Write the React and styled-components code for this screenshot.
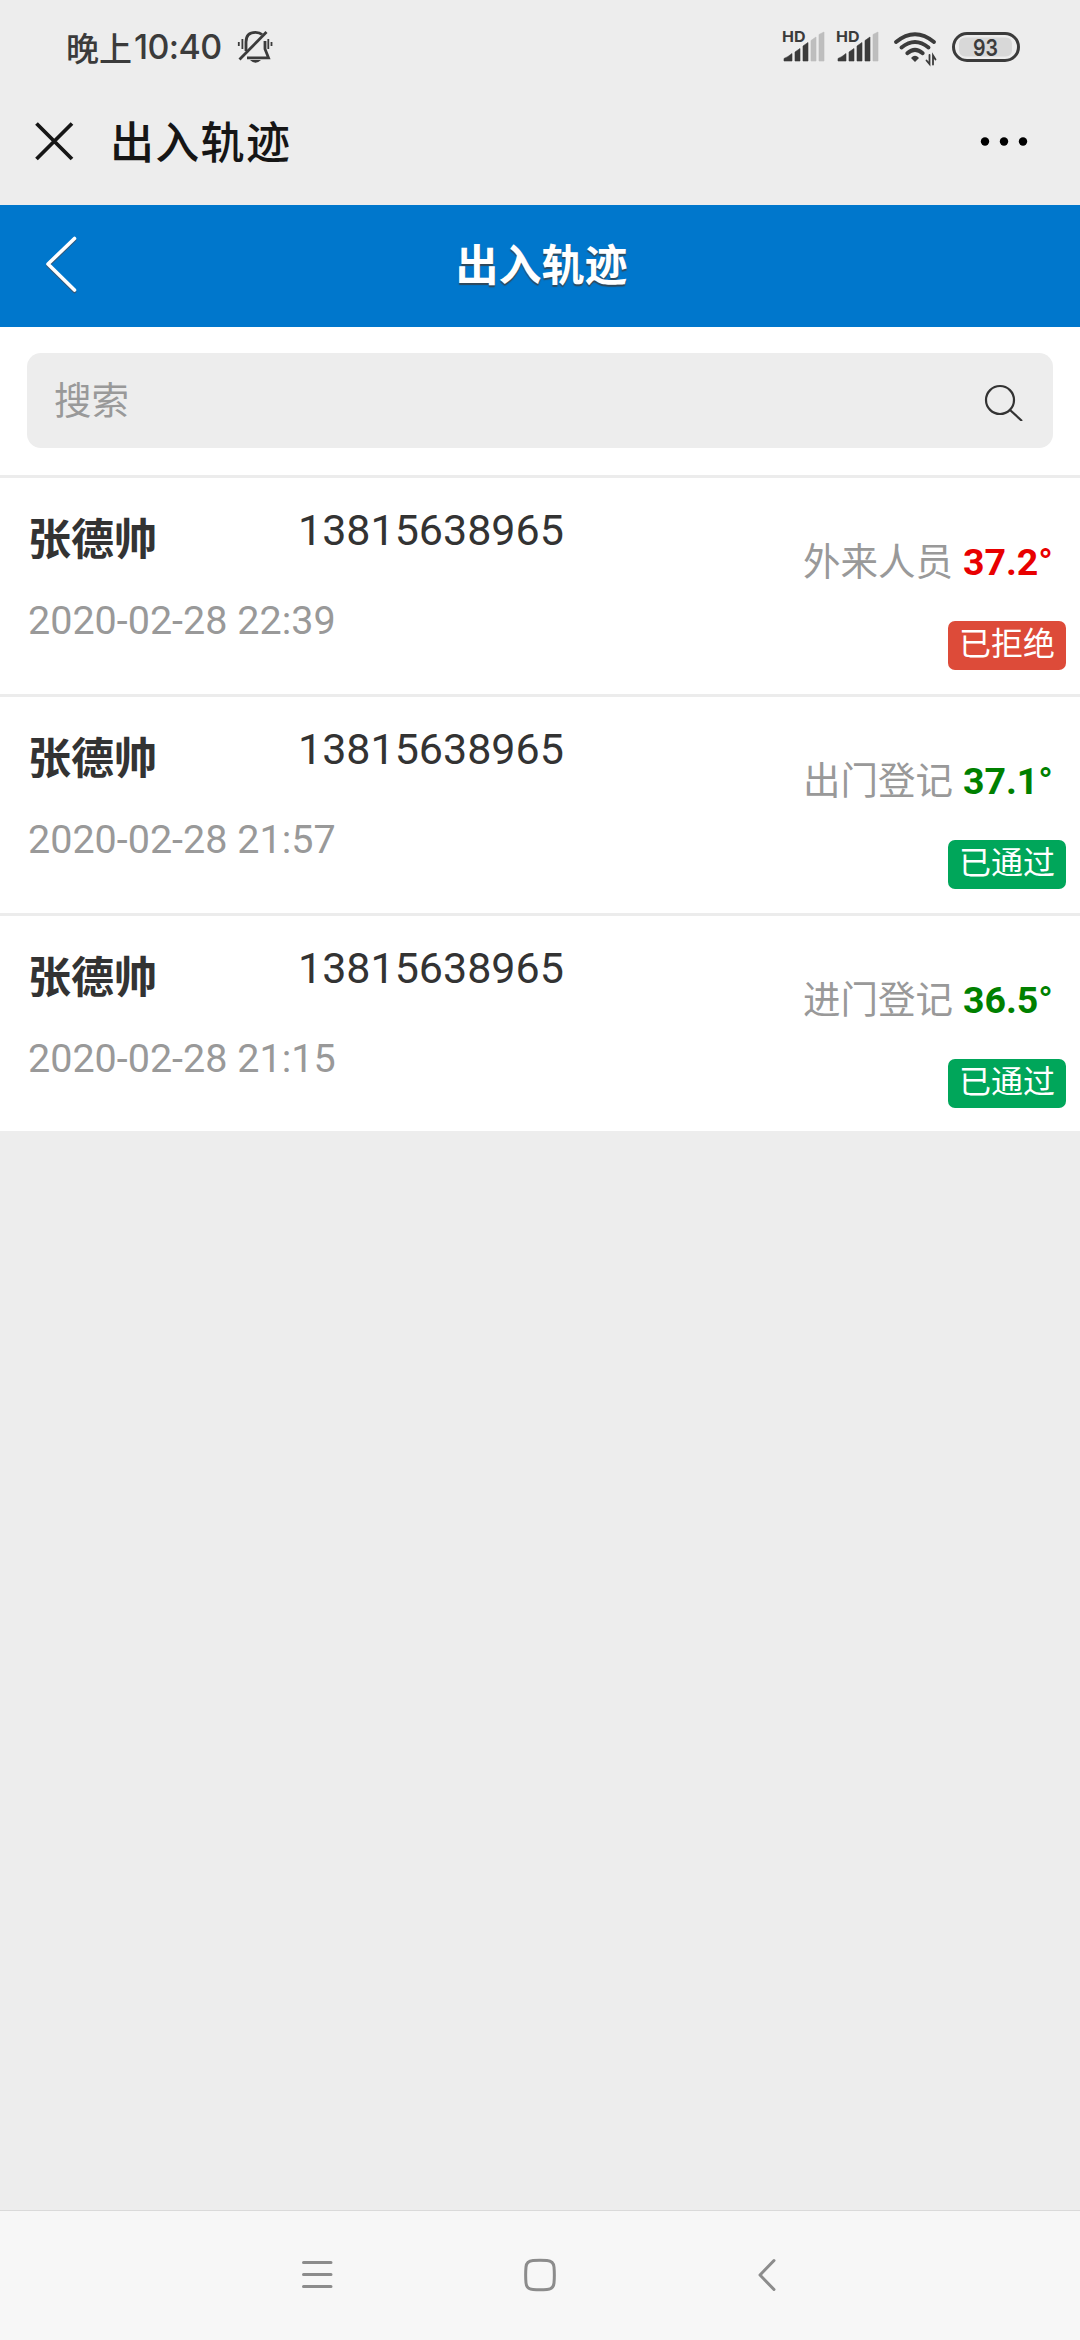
import React from "react";
import styled, { createGlobalStyle } from "styled-components";

const GlobalStyle = createGlobalStyle`
  * {
    box-sizing: border-box;
  }
  body {
    margin: 0;
    background: #ededed;
    font-family: Roboto, "Noto Sans CJK SC", sans-serif;
  }
`;

const Page = styled.div`
  width: 1080px;
  height: 2340px;
  display: flex;
  flex-direction: column;
  background: #ededed;
  overflow: hidden;
`;

const StatusBar = styled.div`
  height: 94px;
  flex: none;
  display: flex;
  justify-content: space-between;
  padding: 0 59px 0 66px;
  color: #3b3b3b;
`;

const StatusSide = styled.div`
  height: 94px;
  display: flex;
  align-items: center;
`;

const Clock = styled.div`
  display: flex;
  align-items: center;
  width: 171px;
  height: 94px;
  white-space: nowrap;
`;

const ClockLabel = styled.span`
  font: 500 33px/94px "Noto Sans CJK SC", sans-serif;
  width: 68px;
`;

const ClockTime = styled.span`
  font: 500 34px/94px Inter, sans-serif;
  letter-spacing: -0.6px;
`;

const HdText = styled.text`
  font: 700 15px Inter, sans-serif;
`;

const BatteryText = styled.text`
  font: 600 23.5px Inter, sans-serif;
`;

const WechatBar = styled.div`
  height: 111px;
  flex: none;
  display: flex;
  align-items: center;
  padding: 0 51px 18px 34px;
  color: #161616;
`;

const WechatTitle = styled.div`
  flex: 1;
  margin: -2px 0 0 36px;
  font: 500 44px/60px "Noto Sans CJK SC", sans-serif;
  letter-spacing: 1.3px;
`;

const Header = styled.div`
  height: 122px;
  flex: none;
  display: grid;
  grid-template-columns: 120px 1fr 120px;
  align-items: center;
  background: #0077cc;
  color: #fff;
`;

const HeaderTitle = styled.div`
  padding: 0 0 8px 3px;
  text-align: center;
  font: 700 43px/60px "Noto Sans CJK SC", sans-serif;
  text-shadow: 0 2px 1px rgba(60, 60, 60, 0.8);
`;

const SearchArea = styled.div`
  height: 148.4px;
  flex: none;
  padding: 26px 27px 0;
  background: #fff;
`;

const SearchBox = styled.div`
  height: 95px;
  display: flex;
  align-items: center;
  justify-content: space-between;
  padding: 0 29px 0 27px;
  border-radius: 14px;
  background: #ededed;
  color: #999;
  font-size: 37.5px;
  line-height: 50px;
`;

const List = styled.div`
  flex: 1;
`;

const Row = styled.div`
  height: 218.6px;
  display: flex;
  justify-content: space-between;
  border-top: 3px solid #ececec;
  background: #fff;
`;

const Person = styled.div`
  padding-left: 28px;
`;

const PersonTop = styled.div`
  display: flex;
  height: 115px;
`;

const Name = styled.div`
  width: 270px;
  padding-top: 28px;
  color: #333;
  font: 700 43px/60px "Noto Sans CJK SC", sans-serif;
`;

const Phone = styled.div`
  padding-top: 27px;
  color: #333;
  font-size: 43px;
  line-height: 50px;
`;

const Time = styled.div`
  color: #999;
  font-size: 39.5px;
  line-height: 56px;
`;

const Record = styled.div`
  display: flex;
  flex-direction: column;
  align-items: flex-end;
  padding: 56px 14px 0 0;
`;

const Kind = styled.div`
  display: flex;
  align-items: baseline;
  gap: 10px;
  height: 87px;
  padding-right: 13px;
  color: #999;
  font-size: 37.5px;
  line-height: 56px;
`;

const Temp = styled.b`
  color: ${(props) => props.$color};
`;

const Badge = styled.div`
  width: 118px;
  height: 49px;
  border-radius: 7px;
  background: ${(props) => props.$color};
  color: #fff;
  text-align: center;
  font-size: 32px;
  line-height: 46px;
`;

const NavBar = styled.div`
  height: 130px;
  flex: none;
  display: grid;
  grid-template-columns: 222px 234px 24px;
  align-items: start;
  padding: 46px 300px 0;
  border-top: 1px solid #dadada;
  background: #f7f7f7;
`;

const records = [
  { id: 1, time: "2020-02-28 22:39", kind: "外来人员", temp: "37.2°", ok: false },
  { id: 2, time: "2020-02-28 21:57", kind: "出门登记", temp: "37.1°", ok: true },
  { id: 3, time: "2020-02-28 21:15", kind: "进门登记", temp: "36.5°", ok: true },
];

function BellOff() {
  return (
    <svg width="36" height="94" viewBox="237 0 36 94" fill="none" stroke="#3b3b3b" strokeWidth="2.8">
      <path d="M246 51V42C246 35 250 32.3 255.500 32.300C258.500 32.300 260.500 33 262 34.500" />
      <path d="M265 41V49L268.500 57.800H247" />
      <path d="M239.500 59.500L266.500 32" />
      <path d="M238.800 42V46M242.400 39V49M268.300 39V49M271.500 42V46" strokeWidth="1.8" />
      <path d="M250 60H261Q255.500 65.500 250 60Z" fill="#3b3b3b" stroke="none" />
    </svg>
  );
}

function Signal({ level }) {
  const bars = [
    "M784 61V58.500Q788 57 792 53.500V61Z",
    "M795 61V52L800 48.500V61Z",
    "M803 61V46L808 42.500V61Z",
    "M811 61V40.500L816 37V61Z",
    "M819 61V34.500L824 32V61Z",
  ];
  return (
    <svg width="54" height="94" viewBox="780 0 54 94">
      <HdText x="782" y="41.500" textLength="23.500" lengthAdjust="spacingAndGlyphs" fill="#3b3b3b">HD</HdText>
      {bars.map((d, i) => (
        <path
          key={i}
          d={d}
          fill={i < level ? "#3b3b3b" : "#bebebe"}
          stroke={i < level ? "#3b3b3b" : "#bebebe"}
          strokeWidth="0.6"
          strokeLinejoin="round"
        />
      ))}
    </svg>
  );
}

function Wifi() {
  return (
    <svg width="60" height="94" viewBox="888 0 60 94" fill="none" stroke="#3b3b3b" strokeWidth="3.9" strokeLinecap="round">
      <path d="M896 42Q915 26.500 934 42" />
      <path d="M901.500 47.500Q915 36.500 928.500 47.500" />
      <path d="M907.300 53.300Q915 46.500 922.700 53.300" />
      <path d="M911 58Q915 53.500 919 58L915 62Z" fill="#3b3b3b" stroke="none" />
      <path d="M929.500 55V64L926.500 60.500M933 64.500V55.500L935.500 59.500" strokeWidth="1.8" />
    </svg>
  );
}

function Battery() {
  return (
    <svg width="73" height="94" viewBox="948 0 73 94">
      <rect x="953.500" y="33.500" width="65" height="27" rx="13.500" fill="#ededed" stroke="#3b3b3b" strokeWidth="3" />
      <rect x="959" y="37.500" width="53" height="19" rx="6" fill="#d8d8d8" />
      <BatteryText x="985.500" y="55.500" textAnchor="middle" textLength="25" lengthAdjust="spacingAndGlyphs" fill="#3b3b3b">93</BatteryText>
    </svg>
  );
}

function App() {
  return (
    <>
      <GlobalStyle />
      <Page>
        <StatusBar>
          <StatusSide>
            <Clock>
              <ClockLabel>晚上</ClockLabel>
              <ClockTime>10:40</ClockTime>
            </Clock>
            <BellOff />
          </StatusSide>
          <StatusSide>
            <Signal level={3} />
            <Signal level={4} />
            <Wifi />
            <Battery />
          </StatusSide>
        </StatusBar>

        <WechatBar>
          <svg width="40" height="40" viewBox="34 120 40 40" stroke="#161616" strokeWidth="3.8">
            <path d="M36.500 122.500L72 158M72 122.500L36.500 158" />
          </svg>
          <WechatTitle>出入轨迹</WechatTitle>
          <svg width="50" height="20" viewBox="979 131 50 20">
            <circle cx="985" cy="141.500" r="4.200" />
            <circle cx="1004" cy="141.500" r="4.200" />
            <circle cx="1023" cy="141.500" r="4.200" />
          </svg>
        </WechatBar>

        <Header>
          <svg width="120" height="122" viewBox="0 205 120 122" fill="none" strokeWidth="3.6" strokeLinecap="round" strokeLinejoin="round">
            <path d="M74.500 240L48 265.500L74.500 291.500" stroke="#33597a" />
            <path d="M74.500 238.500L48 264L74.500 290" stroke="#fff" />
          </svg>
          <HeaderTitle>出入轨迹</HeaderTitle>
        </Header>

        <SearchArea>
          <SearchBox>
            <span>搜索</span>
            <svg width="40" height="40" viewBox="984 380 40 40" fill="none" stroke="#333" strokeWidth="2.2">
              <circle cx="1000" cy="399" r="14" />
              <path d="M1010 409L1022 420" />
            </svg>
          </SearchBox>
        </SearchArea>

        <List>
          {records.map((item) => (
            <Row key={item.id}>
              <Person>
                <PersonTop>
                  <Name>张德帅</Name>
                  <Phone>13815638965</Phone>
                </PersonTop>
                <Time>{item.time}</Time>
              </Person>
              <Record>
                <Kind>
                  <span>{item.kind}</span>
                  <Temp $color={item.ok ? "#008000" : "#e80000"}>{item.temp}</Temp>
                </Kind>
                <Badge $color={item.ok ? "#00a65a" : "#dd4b39"}>{item.ok ? "已通过" : "已拒绝"}</Badge>
              </Record>
            </Row>
          ))}
        </List>

        <NavBar>
          <svg width="34" height="36" viewBox="300 2257 34 36" stroke="#8c8c8c" strokeWidth="3" strokeLinecap="round">
            <path d="M303.500 2262.500H331M303.500 2274.500H331M303.500 2286.500H331" />
          </svg>
          <svg width="36" height="36" viewBox="522 2257 36 36" fill="none" stroke="#8c8c8c" strokeWidth="3">
            <path d="M533 2260.500Q540 2260 547 2260.500Q553.500 2261 554 2267Q554.700 2275 554 2283Q553.500 2289 547 2289.500Q540 2290 533 2289.500Q526.500 2289 526 2283Q525.300 2275 526 2267Q526.500 2261 533 2260.500Z" />
          </svg>
          <svg width="24" height="36" viewBox="756 2257 24 36" fill="none" stroke="#8c8c8c" strokeWidth="3" strokeLinecap="round" strokeLinejoin="round">
            <path d="M774 2260.500L760 2275L774 2289.500" />
          </svg>
        </NavBar>
      </Page>
    </>
  );
}

export default App;
